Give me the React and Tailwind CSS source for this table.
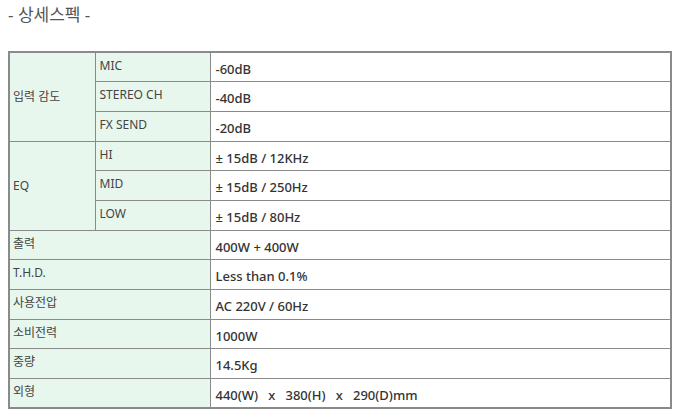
export default function App() {
  const font = { fontFamily: '"Noto Sans", "Noto Sans CJK KR", sans-serif' };
  const lbl = "border border-[#8a8a8a] bg-[#e8f7ee] text-[12px] text-[#444] align-top pt-[4px] pl-[4px]";
  const val = "border border-[#8a8a8a] bg-white text-[13px] font-medium text-[#333] align-middle pt-[5px] pl-[5px]";
  const rows = [
    ["MIC", "-60dB"],
    ["STEREO CH", "-40dB"],
    ["FX SEND", "-20dB"],
  ];
  const eq = [
    ["HI", "± 15dB / 12KHz"],
    ["MID", "± 15dB / 250Hz"],
    ["LOW", "± 15dB / 80Hz"],
  ];
  const single = [
    ["출력", "400W + 400W"],
    ["T.H.D.", "Less than 0.1%"],
    ["사용전압", "AC 220V / 60Hz"],
    ["소비전력", "1000W"],
    ["중량", "14.5Kg"],
    ["외형", "440(W)   x   380(H)   x   290(D)mm"],
  ];
  return (
    <div className="w-[680px] h-[420px] bg-white" style={font}>
      <div className="pl-[8px] pt-[4px] text-[17px] text-[#555] leading-[22px]">- 상세스펙 -</div>
      <table className="ml-[8px] mt-[25px] border-collapse border-2 border-[#8a8a8a] w-[662px] table-fixed">
        <colgroup>
          <col className="w-[86px]" />
          <col className="w-[115px]" />
          <col className="w-[461px]" />
        </colgroup>
        <tbody>
          {rows.map(([k, v], i) => (
            <tr key={k} className="h-[29.7px]">
              {i === 0 && (
                <td rowSpan={3} className="border border-[#8a8a8a] bg-[#e8f7ee] text-[12px] text-[#444] align-middle pl-[3px]">
                  입력 감도
                </td>
              )}
              <td className={lbl}>{k}</td>
              <td className={val}>{v}</td>
            </tr>
          ))}
          {eq.map(([k, v], i) => (
            <tr key={k} className="h-[29.7px]">
              {i === 0 && (
                <td rowSpan={3} className="border border-[#8a8a8a] bg-[#e8f7ee] text-[12px] text-[#444] align-middle pl-[3px]">
                  EQ
                </td>
              )}
              <td className={lbl}>{k}</td>
              <td className={val}>{v}</td>
            </tr>
          ))}
          {single.map(([k, v]) => (
            <tr key={k} className="h-[29.7px]">
              <td colSpan={2} className={lbl.replace("pl-[4px]", "pl-[3px]")}>{k}</td>
              <td className={val + " whitespace-pre"}>{v}</td>
            </tr>
          ))}
        </tbody>
      </table>
    </div>
  );
}
